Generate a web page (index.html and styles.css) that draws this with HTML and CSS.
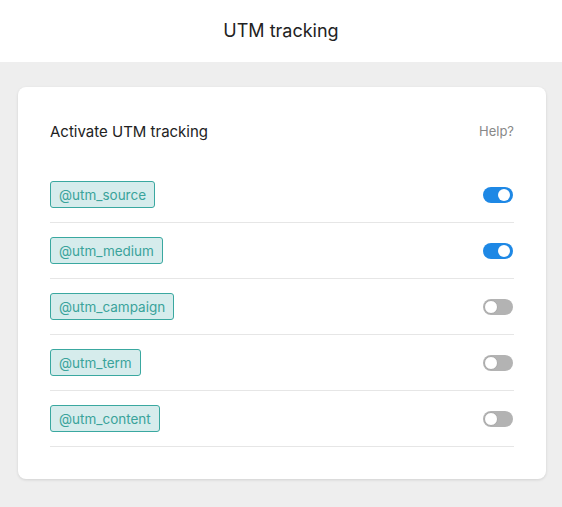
FILE: index.html
```html
<!DOCTYPE html>
<html lang="en">
<head>
    <meta charset="UTF-8">
    <meta name="viewport" content="width=device-width, initial-scale=1.0">
    <title>UTM tracking</title>
    <link rel="stylesheet" href="styles.css">
</head>
<body>
    <header class="page-header">UTM tracking</header>

    <main class="page-body">
        <div class="card">
            <div class="card-head">
                <span class="card-title">Activate UTM tracking</span>
                <a class="help-link" href="#">Help?</a>
            </div>

            <div class="utm-list">
                <div class="utm-row">
                    <span class="tag">@utm_source</span>
                    <span class="toggle on"></span>
                </div>
                <div class="utm-row">
                    <span class="tag">@utm_medium</span>
                    <span class="toggle on"></span>
                </div>
                <div class="utm-row">
                    <span class="tag">@utm_campaign</span>
                    <span class="toggle"></span>
                </div>
                <div class="utm-row">
                    <span class="tag">@utm_term</span>
                    <span class="toggle"></span>
                </div>
                <div class="utm-row">
                    <span class="tag">@utm_content</span>
                    <span class="toggle"></span>
                </div>
            </div>
        </div>
    </main>
</body>
</html>
```

FILE: styles.css
```css
* {
    box-sizing: border-box;
}
html, body {
    margin: 0;
    height: 100%;
}
body {
    font-family: Inter, "Noto Sans", sans-serif;
    background-color: #eeeeee;
    color: #222;
}
.page-header {
    height: 62px;
    background-color: white;
    display: flex;
    align-items: center;
    justify-content: center;
    font-size: 18px;
    color: #222;
    padding-bottom: 2px;
}
.page-body {
    padding: 25px 16px 28px 18px;
}
.card {
    background-color: white;
    border-radius: 8px;
    box-shadow: 0 1px 3px rgba(0,0,0,0.12);
    padding: 32px;
}
.card-head {
    display: flex;
    justify-content: space-between;
    align-items: center;
    height: 24px;
    margin-bottom: 24px;
}
.card-title {
    font-size: 15px;
    color: #222;
}
.help-link {
    font-size: 13px;
    color: #888;
    text-decoration: none;
}
.utm-row {
    display: flex;
    justify-content: space-between;
    align-items: center;
    padding: 14px 0;
    border-bottom: 1px solid #e6e6e6;
}
.tag {
    display: inline-flex;
    align-items: center;
    height: 27px;
    padding: 0 8px;
    font-size: 13.5px;
    color: #3aa39b;
    background-color: #d6ecec;
    border: 1px solid #3aa8a0;
    border-radius: 3px;
}
.toggle {
    position: relative;
    width: 30px;
    height: 16px;
    border-radius: 8px;
    background-color: #b3b3b3;
    margin-right: 1px;
}
.toggle::after {
    content: "";
    position: absolute;
    top: 1px;
    left: 1px;
    width: 14px;
    height: 14px;
    border-radius: 50%;
    background-color: white;
    box-sizing: border-box;
    border: 1px solid #a8a8a8;
}
.toggle.on {
    background-color: #1e88e5;
}
.toggle.on::after {
    left: 15px;
    border: none;
    top: 2px;
    width: 12px;
    height: 12px;
}
```
